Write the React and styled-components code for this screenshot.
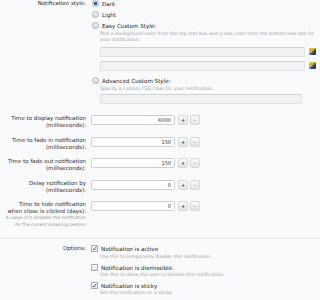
import React from "react";
import styled, { createGlobalStyle } from "styled-components";

const Global = createGlobalStyle`
  html, body { margin: 0; padding: 0; background: #f9fafc; }
  body { font-family: "DejaVu Sans", Verdana, sans-serif; color: #333; }
`;

const Page = styled.div`
  width: 320px;
  height: 300px;
  overflow: hidden;
  background: #f9fafc;
`;

const Row = styled.div`
  display: grid;
  grid-template-columns: 86px 1fr;
  column-gap: 5px;
  margin-bottom: ${(p) => p.$mb || 0}px;
`;

const Label = styled.div`
  text-align: right;
  font-size: 5.5px;
  line-height: 7px;
  color: #2e2e2e;
`;

const LabelHint = styled.div`
  font-size: 4.4px;
  line-height: 6.5px;
  font-style: italic;
  color: #9a9a9a;
`;

const Field = styled.div`
  display: flex;
  flex-direction: column;
`;

const Option = styled.label`
  display: flex;
  align-items: center;
  gap: 3px;
  height: 11px;
  font-size: 5.6px;
  color: #222;
  margin-left: 1px;
  margin-top: ${(p) => p.$mt || 0}px;
`;

const Radio = styled.span`
  width: 5px;
  height: 5px;
  border-radius: 50%;
  border: 0.5px solid #a9b3c0;
  background: ${(p) => (p.$on ? "radial-gradient(circle, #2b5b95 0 1.4px, #e8edf3 1.7px)" : "linear-gradient(#f4f4f4, #d6d6d6)")};
  flex: none;
`;

const Check = styled.span`
  width: 5px;
  height: 5px;
  border: 0.5px solid #a9b0ba;
  background: linear-gradient(#fdfdfd, #e4e6ea);
  flex: none;
  display: flex;
  align-items: center;
  justify-content: center;
  svg { display: block; }
`;

const Hint = styled.div`
  margin-left: ${(p) => p.$ml ?? 9}px;
  margin-top: ${(p) => p.$mt || 0}px;
  font-size: 4.7px;
  line-height: 6px;
  color: #a0a0a0;
  white-space: nowrap;
`;

const BoxLine = styled.div`
  display: flex;
  align-items: center;
  gap: 4px;
  margin-left: 9px;
  margin-top: ${(p) => p.$mt || 0}px;
`;

const TextBox = styled.div`
  width: ${(p) => p.$w}px;
  height: 10px;
  box-sizing: border-box;
  border: 0.5px solid #dfe3e8;
  border-top-color: #cdd2d8;
  background: #f1f2f4;
  border-radius: 1px;
`;

const Swatch = styled.span`
  width: 7px;
  height: 7px;
  border-radius: 1px;
  background: linear-gradient(135deg, #f6c51e 0%, #e8b41a 40%, #244c9a 60%, #0d2a68 100%);
  flex: none;
`;

const SpinLine = styled.div`
  display: flex;
  align-items: center;
  gap: 2px;
`;

const NumInput = styled.div`
  width: 84px;
  height: 10px;
  box-sizing: border-box;
  border: 0.5px solid #c9ced6;
  border-radius: 1.5px;
  background: #fff;
  font-size: 5px;
  line-height: 9px;
  text-align: right;
  padding-right: 3px;
  color: #333;
  margin-right: 1px;
`;

const SpinBtn = styled.span`
  width: 8px;
  height: 8px;
  border-radius: 2px;
  border: 0.5px solid #d3d7de;
  background: linear-gradient(#fafbfc, #e2e5ea);
  font-size: 5px;
  line-height: 8px;
  text-align: center;
  color: ${(p) => (p.$dim ? "#9aa" : "#445")};
  font-weight: bold;
`;

const Separator = styled.div`
  height: 1px;
  background: #e6ebf1;
  margin: 10px 0 6px;
`;

const CheckOption = styled.label`
  display: flex;
  align-items: center;
  gap: 3px;
  height: 7px;
  font-size: 5.6px;
  color: #222;
  margin-top: ${(p) => p.$mt || 0}px;
`;

const Tick = () => (
  <svg width="5" height="5" viewBox="0 0 10 10">
    <path d="M2 5.5 L4 8 L8.5 1.5" fill="none" stroke="#2c5aa0" strokeWidth="1.8" />
  </svg>
);

const spinRows = [
  { l1: "Time to display notification", l2: "(milliseconds):", v: "6000" },
  { l1: "Time to fade in notification", l2: "(milliseconds):", v: "150" },
  { l1: "Time to fade out notification", l2: "(milliseconds):", v: "150" },
  { l1: "Delay notification by", l2: "(milliseconds):", v: "0" },
];

const Spin = ({ v }) => (
  <SpinLine>
    <NumInput>{v}</NumInput>
    <SpinBtn>+</SpinBtn>
    <SpinBtn $dim>-</SpinBtn>
  </SpinLine>
);

export default function App() {
  return (
    <Page>
      <Global />
      <Row $mb={11.5}>
        <Label>Notification style:</Label>
        <Field>
          <Option $mt={-2}>
            <Radio $on />
            Dark
          </Option>
          <Option>
            <Radio />
            Light
          </Option>
          <Option>
            <Radio />
            Easy Custom Style:
          </Option>
          <Hint $mt={-0.5}>
            Pick a background color from the top text box and a text color from the bottom text box for
            <br />
            your notification.
          </Hint>
          <BoxLine $mt={4}>
            <TextBox $w={205} />
            <Swatch />
          </BoxLine>
          <BoxLine $mt={4}>
            <TextBox $w={205} />
            <Swatch />
          </BoxLine>
          <Option $mt={4.5}>
            <Radio />
            Advanced Custom Style:
          </Option>
          <Hint $mt={-0.5}>Specify a custom CSS class for your notification.</Hint>
          <BoxLine $mt={2}>
            <TextBox $w={202} />
          </BoxLine>
        </Field>
      </Row>
      {spinRows.map((r) => (
        <Row key={r.l1} $mb={7.5}>
          <Label>
            {r.l1}
            <br />
            {r.l2}
          </Label>
          <Field>
            <Spin v={r.v} />
          </Field>
        </Row>
      ))}
      <Row>
        <Label>
          Time to hide notification
          <br />
          when close is clicked (days):
          <LabelHint>
            A value of 0 disables the notification
            <br />
            for the current browsing session
          </LabelHint>
        </Label>
        <Field>
          <Spin v="0" />
        </Field>
      </Row>
      <Separator />
      <Row>
        <Label>Options:</Label>
        <Field>
          <CheckOption>
            <Check>
              <Tick />
            </Check>
            Notification is active
          </CheckOption>
          <Hint $mt={1.5}>Use this to temporarily disable this notification</Hint>
          <CheckOption $mt={4.5}>
            <Check />
            Notification is dismissible.
          </CheckOption>
          <Hint $mt={0.5}>Use this to allow the user to dismiss this notification.</Hint>
          <CheckOption $mt={4.5}>
            <Check>
              <Tick />
            </Check>
            Notification is sticky
          </CheckOption>
          <Hint $mt={1}>Set this notification as a sticky.</Hint>
        </Field>
      </Row>
    </Page>
  );
}
